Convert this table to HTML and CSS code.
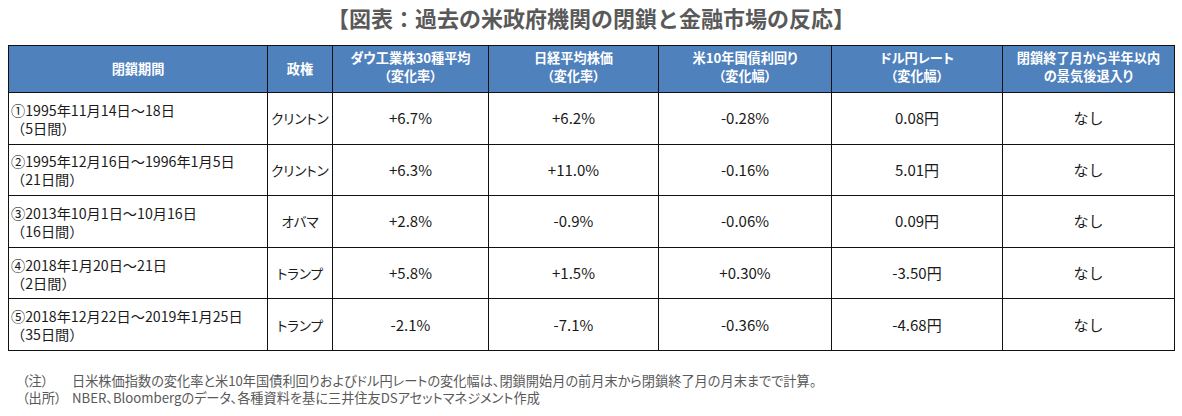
FILE: index.html
```html
<!DOCTYPE html>
<html lang="ja">
<head>
<meta charset="utf-8">
<title>図表：過去の米政府機関の閉鎖と金融市場の反応</title>
<link rel="stylesheet" href="styles.css">
</head>
<body>
<div class="page">
  <h1 class="title">【図表：過去の米政府機関の閉鎖と金融市場の反応】</h1>
  <table class="grid">
    <colgroup>
      <col class="c-period">
      <col class="c-admin">
      <col class="c-dow">
      <col class="c-nikkei">
      <col class="c-bond">
      <col class="c-fx">
      <col class="c-rec">
    </colgroup>
    <thead>
      <tr>
        <th>閉鎖期間</th>
        <th>政権</th>
        <th class="two">ダウ工業株30種平均<br>（変化率）</th>
        <th class="two">日経平均株価<br>（変化率）</th>
        <th class="two">米10年国債利回り<br>（変化幅）</th>
        <th class="two">ドル円レート<br>（変化幅）</th>
        <th class="two">閉鎖終了月から半年以内<br>の景気後退入り</th>
      </tr>
    </thead>
    <tbody>
      <tr>
        <td class="period">①1995年11月14日～18日<br>（5日間）</td>
        <td class="kana">クリントン</td>
        <td>+6.7%</td>
        <td>+6.2%</td>
        <td>-0.28%</td>
        <td>0.08円</td>
        <td>なし</td>
      </tr>
      <tr>
        <td class="period">②1995年12月16日～1996年1月5日<br>（21日間）</td>
        <td class="kana">クリントン</td>
        <td>+6.3%</td>
        <td>+11.0%</td>
        <td>-0.16%</td>
        <td>5.01円</td>
        <td>なし</td>
      </tr>
      <tr>
        <td class="period">③2013年10月1日～10月16日<br>（16日間）</td>
        <td class="kana">オバマ</td>
        <td>+2.8%</td>
        <td>-0.9%</td>
        <td>-0.06%</td>
        <td>0.09円</td>
        <td>なし</td>
      </tr>
      <tr>
        <td class="period">④2018年1月20日～21日<br>（2日間）</td>
        <td class="kana">トランプ</td>
        <td>+5.8%</td>
        <td>+1.5%</td>
        <td>+0.30%</td>
        <td>-3.50円</td>
        <td>なし</td>
      </tr>
      <tr>
        <td class="period">⑤2018年12月22日～2019年1月25日<br>（35日間）</td>
        <td class="kana">トランプ</td>
        <td>-2.1%</td>
        <td>-7.1%</td>
        <td>-0.36%</td>
        <td>-4.68円</td>
        <td>なし</td>
      </tr>
    </tbody>
  </table>
  <div class="notes">
    <div class="note"><span class="label">（注）</span><span class="text">日米株価指数の変化率と米10年国債利回りおよびドル円レートの変化幅は、閉鎖開始月の前月末から閉鎖終了月の月末までで計算。</span></div>
    <div class="note"><span class="label">（出所）</span><span class="text">NBER、Bloombergのデータ、各種資料を基に三井住友DSアセットマネジメント作成</span></div>
  </div>
</div>
</body>
</html>
```

FILE: styles.css
```css
html, body {
  margin: 0;
  padding: 0;
  background: #ffffff;
}

body {
  font-family: "Noto Sans CJK JP", "Noto Sans", sans-serif;
  color: #1a1a1a;
}

.page {
  padding: 0 8px;
  width: 1166px;
}

.title {
  margin: 0 0 11px 0;
  height: 34px;
  line-height: 34px;
  font-size: 22px;
  font-weight: bold;
  color: #595959;
  text-align: center;
}

.grid {
  width: 1166px;
  border-collapse: collapse;
  table-layout: fixed;
}

.c-period { width: 259px; }
.c-admin { width: 65px; }
.c-dow { width: 156px; }
.c-nikkei { width: 170px; }
.c-bond { width: 173px; }
.c-fx { width: 171px; }
.c-rec { width: 172px; }

.grid th,
.grid td {
  border: 1px solid #111111;
  padding: 0;
  text-align: center;
  vertical-align: middle;
}

.grid thead tr {
  height: 47px;
}

.grid th {
  background: #4f81bd;
  color: #ffffff;
  font-size: 13.2px;
  font-weight: bold;
  line-height: 18px;
  font-feature-settings: "palt";
}

.grid th.two {
  padding-bottom: 5px;
}

.grid tbody tr {
  height: 51.6px;
}

.grid td {
  font-size: 15px;
  line-height: 18px;
  color: #1a1a1a;
}

.grid td.kana {
  font-size: 13.5px;
  font-feature-settings: "palt";
}

.grid td.period {
  font-size: 14.2px;
  line-height: 18px;
  text-align: left;
  padding-left: 2px;
  padding-top: 1px;
}

.notes {
  margin-top: 21px;
  padding-left: 14px;
  font-size: 13.2px;
  line-height: 17px;
  color: #595959;
  font-feature-settings: "palt";
}

.note {
  display: flex;
}

.label {
  width: 50px;
  flex: none;
}
```
